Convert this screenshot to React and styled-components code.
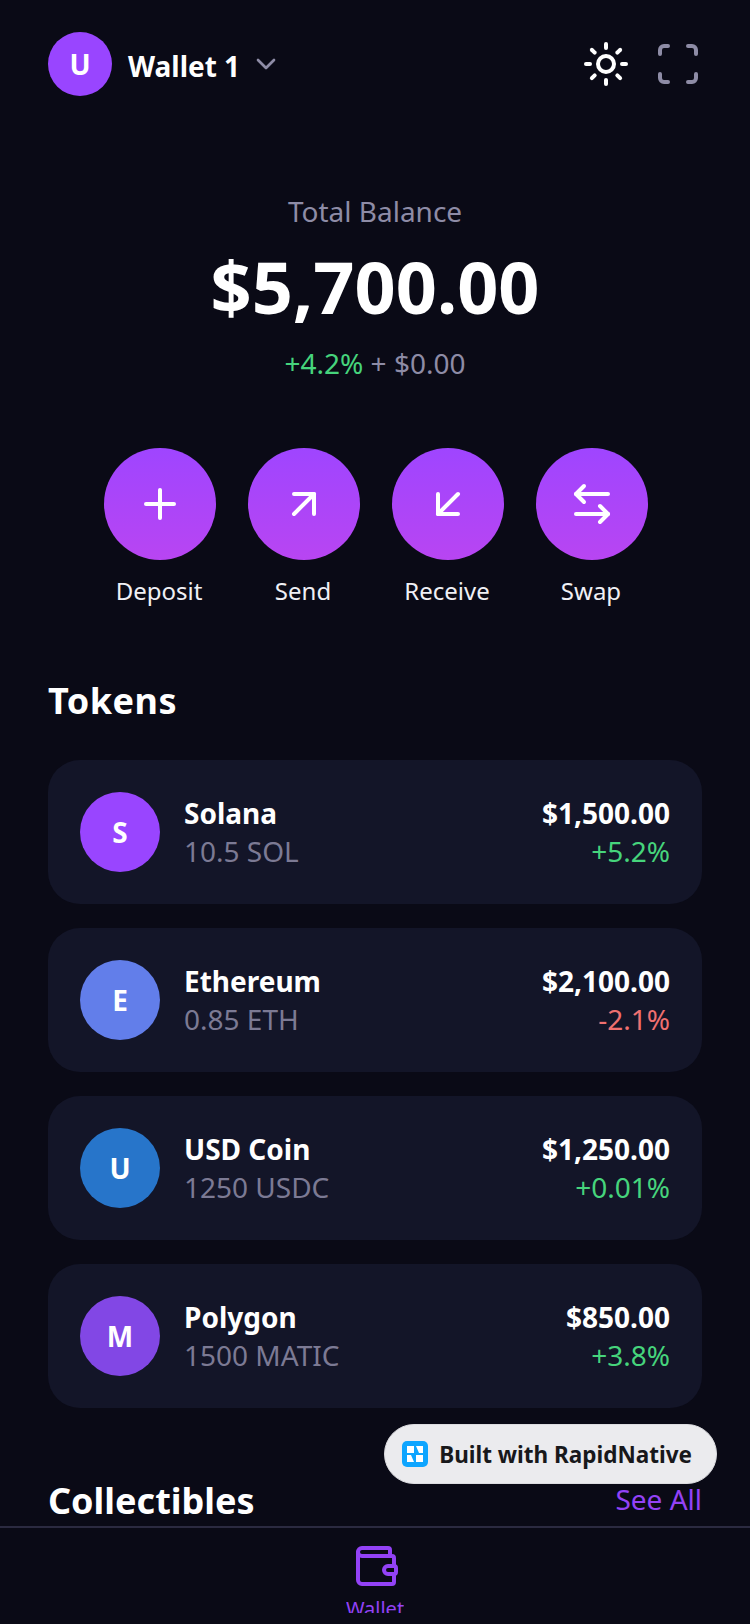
import React from "react";
import styled, { createGlobalStyle } from "styled-components";
import {
  ArrowDownLeft,
  ArrowLeftRight,
  ArrowUpRight,
  ChevronDown,
  Plus,
  Scan,
  Sun,
  Wallet,
} from "lucide-react";

const actions = [
  { label: "Deposit", Icon: Plus },
  { label: "Send", Icon: ArrowUpRight },
  { label: "Receive", Icon: ArrowDownLeft },
  { label: "Swap", Icon: ArrowLeftRight },
];

const tokens = [
  { name: "Solana", amount: "10.5 SOL", value: "$1,500.00", change: "+5.2%", letter: "S", color: "#9945ff" },
  { name: "Ethereum", amount: "0.85 ETH", value: "$2,100.00", change: "-2.1%", letter: "E", color: "#627eea" },
  { name: "USD Coin", amount: "1250 USDC", value: "$1,250.00", change: "+0.01%", letter: "U", color: "#2775ca" },
  { name: "Polygon", amount: "1500 MATIC", value: "$850.00", change: "+3.8%", letter: "M", color: "#8247e5" },
];

export default function App() {
  return (
    <Screen>
      <GlobalStyle />
      <Content>
        <Header>
          <WalletPicker>
            <Avatar>U</Avatar>
            <WalletName>Wallet 1</WalletName>
            <ChevronDown size={32} color="#8e8ca6" />
          </WalletPicker>
          <HeaderIcons>
            <Sun size={48} color="#ffffff" />
            <Scan size={48} color="#8e8ca6" />
          </HeaderIcons>
        </Header>

        <Balance>
          <BalanceLabel>Total Balance</BalanceLabel>
          <BalanceValue>$5,700.00</BalanceValue>
          <BalanceChange>
            <Change $negative={false}>+4.2%</Change> + $0.00
          </BalanceChange>
        </Balance>

        <Actions>
          {actions.map(({ label, Icon }) => (
            <Action key={label}>
              <ActionCircle>
                <Icon size={48} color="#ffffff" />
              </ActionCircle>
              <ActionLabel>{label}</ActionLabel>
            </Action>
          ))}
        </Actions>

        <TokensTitle>Tokens</TokensTitle>
        <TokenList>
          {tokens.map((token) => (
            <TokenCard key={token.name}>
              <TokenIcon $color={token.color}>{token.letter}</TokenIcon>
              <TokenInfo>
                <TokenName>{token.name}</TokenName>
                <TokenAmount>{token.amount}</TokenAmount>
              </TokenInfo>
              <TokenPrice>
                <TokenValue>{token.value}</TokenValue>
                <Change $negative={token.change.startsWith("-")}>{token.change}</Change>
              </TokenPrice>
            </TokenCard>
          ))}
        </TokenList>

        <SectionHead>
          <SectionTitle>Collectibles</SectionTitle>
          <SeeAll>See All</SeeAll>
        </SectionHead>
      </Content>

      <Badge>
        <BadgeLogo viewBox="0 0 26 26">
          <rect width="26" height="26" rx="5" fill="#0ea5ff" />
          <path d="M5 5h7v7H5z M14 5h7v7h-4z M5 14h4l3 7H5z M14 14h7v7h-7z" fill="#ffffff" />
        </BadgeLogo>
        <BadgeText>Built with RapidNative</BadgeText>
      </Badge>

      <TabBar>
        <Tab>
          <Wallet size={48} color="#9342f6" />
          <TabLabel>Wallet</TabLabel>
        </Tab>
      </TabBar>
    </Screen>
  );
}

const GlobalStyle = createGlobalStyle`
  html, body {
    margin: 0;
    padding: 0;
    background: #0a0a16;
  }
  * {
    box-sizing: border-box;
  }
`;

const Screen = styled.div`
  position: relative;
  width: 750px;
  height: 1624px;
  display: flex;
  flex-direction: column;
  overflow: hidden;
  background: #0a0a16;
  color: #ffffff;
  font-family: "Noto Sans", "Open Sans", sans-serif;
`;

const Content = styled.main`
  flex: 1;
  min-height: 0;
  overflow: hidden;
  padding: 32px 48px 0;
`;

const Header = styled.header`
  display: flex;
  align-items: center;
  justify-content: space-between;
  height: 64px;
`;

const WalletPicker = styled.div`
  display: flex;
  align-items: center;
`;

const Avatar = styled.div`
  width: 64px;
  height: 64px;
  border-radius: 50%;
  display: flex;
  align-items: center;
  justify-content: center;
  background: #9945ff;
  font-size: 28px;
  font-weight: 700;
`;

const WalletName = styled.span`
  margin: 4px 10px 0 16px;
  font-size: 28px;
  font-weight: 700;
`;

const HeaderIcons = styled.div`
  display: flex;
  gap: 24px;
`;

const Balance = styled.section`
  margin-top: 96px;
  display: flex;
  flex-direction: column;
  align-items: center;
`;

const BalanceLabel = styled.div`
  font-size: 28px;
  line-height: 38px;
  color: #8e8ca6;
`;

const BalanceValue = styled.div`
  margin-top: 7px;
  font-size: 72px;
  line-height: 98px;
  font-weight: 700;
`;

const BalanceChange = styled.div`
  margin-top: 9px;
  font-size: 28px;
  line-height: 38px;
  color: #8e8ca6;
`;

const Change = styled.span`
  font-size: 28px;
  line-height: 38px;
  color: ${(p) => (p.$negative ? "#f07070" : "#46d47c")};
`;

const Actions = styled.section`
  margin-top: 66px;
  padding-left: 2px;
  display: flex;
  justify-content: center;
  gap: 32px;
`;

const Action = styled.div`
  width: 112px;
  display: flex;
  flex-direction: column;
  align-items: center;
`;

const ActionCircle = styled.div`
  width: 112px;
  height: 112px;
  border-radius: 50%;
  display: flex;
  align-items: center;
  justify-content: center;
  background: linear-gradient(180deg, #9f45ff, #b845f2);
`;

const ActionLabel = styled.div`
  margin-top: 11px;
  padding-right: 2px;
  font-size: 24px;
  line-height: 40px;
  color: #f0f0f5;
  white-space: nowrap;
`;

const TokensTitle = styled.h2`
  margin: 65px 0 0;
  font-size: 36px;
  line-height: 50px;
  font-weight: 700;
  letter-spacing: 0.5px;
`;

const TokenList = styled.div`
  margin-top: 34px;
  display: flex;
  flex-direction: column;
  gap: 24px;
`;

const TokenCard = styled.article`
  height: 144px;
  padding: 0 32px;
  display: flex;
  align-items: center;
  border-radius: 32px;
  background: #131528;
`;

const TokenIcon = styled.div`
  width: 80px;
  height: 80px;
  border-radius: 50%;
  display: flex;
  align-items: center;
  justify-content: center;
  background: ${(p) => p.$color};
  font-size: 28px;
  font-weight: 700;
`;

const TokenInfo = styled.div`
  flex: 1;
  margin-left: 24px;
`;

const TokenName = styled.div`
  font-size: 28px;
  line-height: 38px;
  font-weight: 700;
`;

const TokenAmount = styled.div`
  font-size: 28px;
  line-height: 38px;
  color: #7c7a94;
`;

const TokenPrice = styled.div`
  display: flex;
  flex-direction: column;
  align-items: flex-end;
`;

const TokenValue = styled.div`
  font-size: 28px;
  line-height: 38px;
  font-weight: 700;
`;

const SectionHead = styled.div`
  margin-top: 68px;
  display: flex;
  align-items: center;
  justify-content: space-between;
`;

const SectionTitle = styled.h2`
  margin: 0;
  font-size: 36px;
  line-height: 50px;
  font-weight: 700;
`;

const SeeAll = styled.span`
  margin-bottom: 4px;
  font-size: 28px;
  color: #9342f6;
`;

const Badge = styled.div`
  position: absolute;
  top: 1424px;
  right: 33px;
  height: 60px;
  padding: 0 24px 0 17px;
  display: flex;
  align-items: center;
  gap: 11px;
  border-radius: 30px;
  border: 1px solid #dcdce0;
  background: #ebebee;
`;

const BadgeLogo = styled.svg`
  width: 26px;
  height: 26px;
`;

const BadgeText = styled.span`
  font-size: 22.5px;
  font-weight: 700;
  color: #18181b;
`;

const TabBar = styled.nav`
  height: 98px;
  padding-top: 14px;
  border-top: 2px solid #2b2a40;
  display: flex;
  justify-content: center;
`;

const Tab = styled.div`
  height: 71px;
  overflow: hidden;
  display: flex;
  flex-direction: column;
  align-items: center;

  svg {
    flex-shrink: 0;
    margin-left: 2px;
  }
`;

const TabLabel = styled.span`
  margin-top: 5px;
  font-size: 20px;
  line-height: 27px;
  color: #9342f6;
`;
